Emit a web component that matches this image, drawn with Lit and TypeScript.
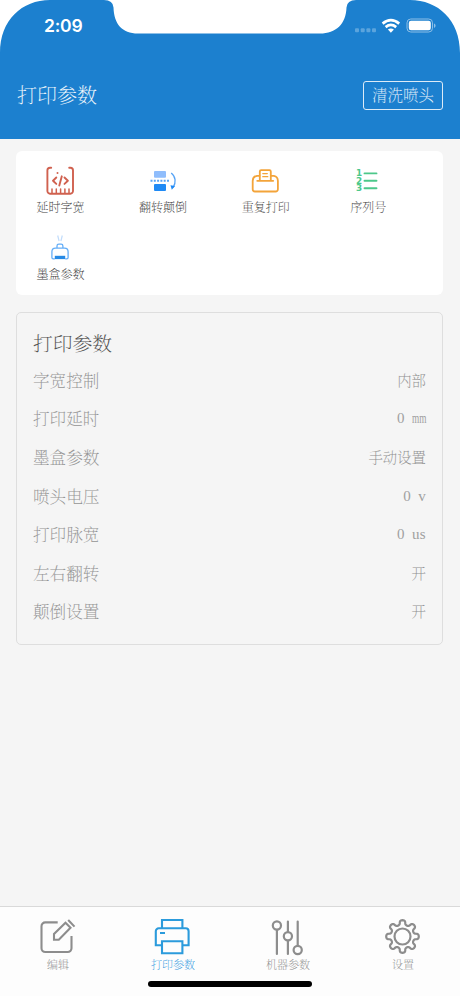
import { LitElement, html, svg, css } from "lit";
import { customElement } from "lit/decorators.js";
import { classMap } from "lit/directives/class-map.js";

const ruler = svg`<g fill="none" stroke="#d0614f" stroke-width="1.9" stroke-linecap="round" stroke-linejoin="round">
  <path d="M6.200 2.700H5a2.600 2.600 0 0 0-2.600 2.600v20.800a2.600 2.600 0 0 0 2.600 2.600h20.400a2.600 2.600 0 0 0 2.600-2.600V5.300a2.600 2.600 0 0 0-2.600-2.600H24.200"/>
  <path d="M7 24v4M11.300 24v4M15.600 24v4M19.900 24v4M24 24v4" stroke-width="1.500"/>
  <path d="M11.300 12.500L8 15.700l3.300 3.200M19.500 12.500l3.400 3.200-3.400 3.200M16.800 11.300l-2.500 9.300"/></g>
  <circle cx="12.500" cy="8" r="1" fill="#d0614f"/>`;

const flip = svg`<rect x="7" y="6" width="12" height="6.800" rx="1" fill="#8fbdfc"/>
  <rect x="7" y="19" width="12" height="7" rx="1" fill="#1f8af5"/>
  <path d="M3.500 15.800h19" stroke="#56a3f5" stroke-width="1.900" stroke-dasharray="2 1.300"/>
  <path d="M24.200 8c4.600 3.500 5 9.500 2 14.500" fill="none" stroke="#56a3f5" stroke-width="1.300"/>
  <path d="M23.500 20.200l4.600.9-3.300 3.600z" fill="#1f8af5"/>`;

const repeat = svg`<g fill="none" stroke="#f3a43a" stroke-width="1.800" stroke-linejoin="round" stroke-linecap="round">
  <path d="M9.500 10.800H7Q2.700 11.500 2.700 16v8.300a2.200 2.200 0 0 0 2.200 2.200h20.800a2.200 2.200 0 0 0 2.200-2.200V16q0-4.500-4-5.200h-2.600"/>
  <path d="M9.800 15.500V6.500a1.300 1.300 0 0 1 1.300-1.300h8.400a1.300 1.300 0 0 1 1.300 1.300v9M7.200 15.800h16"/>
  <path d="M12.800 8.600h4.500M12.800 11.700h5" stroke-width="1.300"/></g>`;

const list = svg`<path d="M12.500 8.400h12M12.500 15.800h12M12.500 23.200h12" stroke="#4cc88a" stroke-width="1.900" stroke-linecap="round"/>
  <g class="digits"><text x="7" y="11.200">1</text><text x="7" y="18.700">2</text><text x="7" y="26.200">3</text></g>`;

const cartridge = svg`<g fill="none" stroke="#65aef7" stroke-width="1.300">
  <path d="M12.700 3.500l1.400 5.500M17.300 3.500l-1.400 5.500" stroke="#c1dcfb" stroke-width="1.200"/>
  <path d="M12 16v-2q0-1.800 1.800-1.800h2.300q1.800 0 1.800 1.800v2"/>
  <path d="M9.800 26.800H8.300q-1.400 0-1.400-1.400v-5.600q0-3.600 3.500-3.600h9.200q3.500 0 3.500 3.600v5.600q0 1.400-1.400 1.400h-1.500"/></g>
  <path d="M9.800 23.800h10.400v3.300H9.800z" fill="#278ae5"/>`;

const edit = svg`<g fill="none" stroke="#8d8d8d" stroke-width="2.100">
  <path d="M18.700 5.400H6.300a3.800 3.800 0 0 0-3.800 3.800v22a3.800 3.800 0 0 0 3.800 3.800h22.400a3.800 3.800 0 0 0 3.800-3.800V19"/>
  <path d="M15 22.800v-5.800L26.500 5.700l5 5-11.700 12.100zM29.200 3l6.300 6.600"/></g>`;

const printer = svg`<g fill="none" stroke="#2b9bdc" stroke-width="2.100" transform="translate(-1 0)">
  <path d="M9 11V3h20.400v8M8.500 28.300H2.800V14.200a2.900 2.900 0 0 1 2.900-2.900h27a2.900 2.900 0 0 1 2.900 2.900v14.100h-5.800"/>
  <path d="M9 24.300h20.400v11.900H9zM7 16h5"/></g>`;

const sliders = svg`<g fill="none" stroke="#8d8d8d" stroke-width="2.200" stroke-linecap="round">
  <path d="M7.900 13.500v23.500M18.900 4.500v10M18.900 24v13M28.700 4.500v23.500"/>
  <circle cx="7.900" cy="8.500" r="4.100"/><circle cx="18.900" cy="19.200" r="4.100"/><circle cx="28.700" cy="33" r="4.100"/></g>`;

// Eight rounded teeth: the radius swings between valley and tip around the hub.
const gearOutline = Array.from({ length: 160 }, (_, i) => {
  const a = (i / 160) * Math.PI * 2;
  const r = 14 + 2.300 * Math.cos(8 * a);
  const t = a + 0.045 * Math.sin(16 * a);
  return `${(r * Math.cos(t)).toFixed(2)} ${(r * Math.sin(t)).toFixed(2)}`;
}).join("L");

const gear = svg`<g fill="none" stroke="#8d8d8d" stroke-width="2.200" stroke-linejoin="round" transform="translate(18.500 19.500)">
  <circle r="8"/><path d=${`M${gearOutline}Z`} /></g>`;

const tools = [
  { label: "延时字宽", icon: ruler },
  { label: "翻转颠倒", icon: flip },
  { label: "重复打印", icon: repeat },
  { label: "序列号", icon: list },
  { label: "墨盒参数", icon: cartridge },
];

const params: { name: string; value: string; unit?: string }[] = [
  { name: "字宽控制", value: "内部" },
  { name: "打印延时", value: "0", unit: "mm" },
  { name: "墨盒参数", value: "手动设置" },
  { name: "喷头电压", value: "0", unit: "v" },
  { name: "打印脉宽", value: "0", unit: "us" },
  { name: "左右翻转", value: "开" },
  { name: "颠倒设置", value: "开" },
];

const tabs = [
  { label: "编辑", icon: edit, active: false },
  { label: "打印参数", icon: printer, active: true },
  { label: "机器参数", icon: sliders, active: false },
  { label: "设置", icon: gear, active: false },
];

@customElement("app-root")
export class AppRoot extends LitElement {
  static styles = css`
    :host {
      display: flex;
      flex-direction: column;
      position: relative;
      width: 460px;
      height: 996px;
      overflow: hidden;
      background: #f5f5f5;
      font-family: "Noto Serif CJK SC", "Noto Sans CJK SC", serif;
      font-weight: 200;
    }
    * { box-sizing: border-box; }
    svg { display: block; }
    header { height: 139px; flex: none; background: #1c80cf; color: #fff; }
    .cutout { position: absolute; left: 0; top: 0; }
    .status {
      position: relative;
      height: 51px;
      display: flex;
      justify-content: space-between;
      align-items: center;
      padding: 0 22px 0 44px;
    }
    .clock { font: 600 17.500px/20px Inter, sans-serif; letter-spacing: -0.200px; }
    .bar {
      height: 88px;
      padding: 0 17px;
      display: flex;
      align-items: center;
      justify-content: space-between;
    }
    .title { font-size: 20px; line-height: 28px; color: #edf5fb; padding-bottom: 1px; }
    .clean {
      width: 80px;
      height: 29px;
      display: flex;
      align-items: center;
      justify-content: center;
      border: 1.300px solid #dcebf7;
      border-radius: 3px;
      background: none;
      padding: 0 0 2px;
      font: inherit;
      font-size: 15.500px;
      color: #e0eef9;
      white-space: nowrap;
    }
    .tools {
      margin: 12px 17px 0 16px;
      height: 144px;
      flex: none;
      padding-top: 14px;
      background: #fff;
      border-radius: 6px;
      display: grid;
      grid-template-columns: repeat(4, 102.600px);
      grid-auto-rows: 66.600px;
    }
    .tool {
      display: flex;
      flex-direction: column;
      align-items: center;
      width: 89px;
      font-size: 12px;
      line-height: 19px;
      color: #404040;
    }
    .digits text { font: 700 8.800px "DejaVu Sans", sans-serif; fill: #4cc88a; text-anchor: middle; }
    .panel {
      margin: 16.500px 17px 0 16px;
      height: 333px;
      flex: none;
      border: 1px solid #dedede;
      border-radius: 5px;
      padding: 14px 16px 0;
    }
    .panel h2 {
      margin: 0;
      font-size: 19.800px;
      line-height: 32px;
      font-weight: 200;
      color: #505050;
    }
    .rows { margin-top: 2px; }
    .row {
      height: 38.600px;
      display: flex;
      align-items: center;
      justify-content: space-between;
      font-size: 16.600px;
      color: #949494;
    }
    .value { font-size: 14.400px; display: flex; color: #909090; padding-bottom: 1px; }
    .measure {
      gap: 7.500px;
      font-family: "Liberation Serif", serif;
      font-size: 15px;
      font-weight: 400;
      color: #a0a0a0;
      padding: 1px 0 0;
    }
    .unit { letter-spacing: 0.300px; }
    .narrow { width: 14px; letter-spacing: 0; }
    .narrow span { display: inline-block; transform: scaleX(0.620); transform-origin: left; }
    .tabs {
      margin-top: auto;
      height: 90px;
      flex: none;
      border-top: 1px solid #d9d9d9;
      background: #fdfdfd;
      display: grid;
      grid-template-columns: repeat(4, 115px);
    }
    .tab {
      display: flex;
      flex-direction: column;
      align-items: center;
      padding: 10px 0 0 1px;
      font-size: 11px;
      line-height: 17px;
      color: #8c8c8c;
    }
    .active { color: #2f98e0; }
    .home {
      position: absolute;
      left: 148px;
      top: 981px;
      width: 164px;
      height: 6px;
      border-radius: 3px;
      background: #000;
    }
  `;

  render() {
    return html`
      <header>
        <svg class="cutout" width="460" height="54" viewBox="0 0 460 54" fill="#fff">
          <path d="M0 0H50C22 0 0 20 0 53zM460 0H410C438 0 460 20 460 53z" />
          <path d="M104 0Q113 0 113.500 7.500C114 24 122 33.500 138 33.500H320C336 33.500 346 24 346.500 7.500Q347 0 356 0z" />
        </svg>
        <div class="status">
          <span class="clock">2:09</span>
          <svg width="84" height="20" viewBox="0 0 84 20">
            <g fill="#5ba4dd">
              <rect x="1" y="12.300" width="4" height="4" rx="1" /><rect x="6.700" y="12.300" width="4" height="4" rx="1" />
              <rect x="12.400" y="12.300" width="4" height="4" rx="1" /><rect x="18" y="12.300" width="4" height="4" rx="1" />
            </g>
            <g fill="none" stroke="#fff" stroke-width="2.700">
              <path d="M28.600 7.600q8.300-6.800 16.600 0M31.600 11.100q5.300-4.300 10.600 0" />
            </g>
            <path d="M33.900 13.600q3-2.400 6 0L36.900 16.700z" fill="#fff" />
            <rect x="53" y="3" width="25.500" height="13" rx="3.800" fill="none" stroke="#8dbfe7" />
            <rect x="54.800" y="4.700" width="22" height="9.600" rx="2.200" fill="#fff" />
            <path d="M80 7.500q1.600.600 1.600 2.200T80 11.900z" fill="#8dbfe7" />
          </svg>
        </div>
        <div class="bar">
          <span class="title">打印参数</span>
          <button class="clean">清洗喷头</button>
        </div>
      </header>
      <section class="tools">
        ${tools.map((t) => html`<div class="tool">
          <svg width="32" height="32" viewBox="0 0 32 32">${t.icon}</svg>
          <span>${t.label}</span>
        </div>`)}
      </section>
      <section class="panel">
        <h2>打印参数</h2>
        <div class="rows">
          ${params.map((p) => html`<div class="row">
            <span>${p.name}</span>
            <span class=${classMap({ value: true, measure: !!p.unit })}>
              <span>${p.value}</span>
              ${p.unit ? html`<span class=${classMap({ unit: true, narrow: p.unit === "mm" })}><span>${p.unit}</span></span>` : null}
            </span>
          </div>`)}
        </div>
      </section>
      <nav class="tabs">
        ${tabs.map((t) => html`<div class=${classMap({ tab: true, active: t.active })}>
          <svg width="38" height="39" viewBox="0 0 38 39">${t.icon}</svg>
          <span>${t.label}</span>
        </div>`)}
      </nav>
      <div class="home"></div>
    `;
  }
}
